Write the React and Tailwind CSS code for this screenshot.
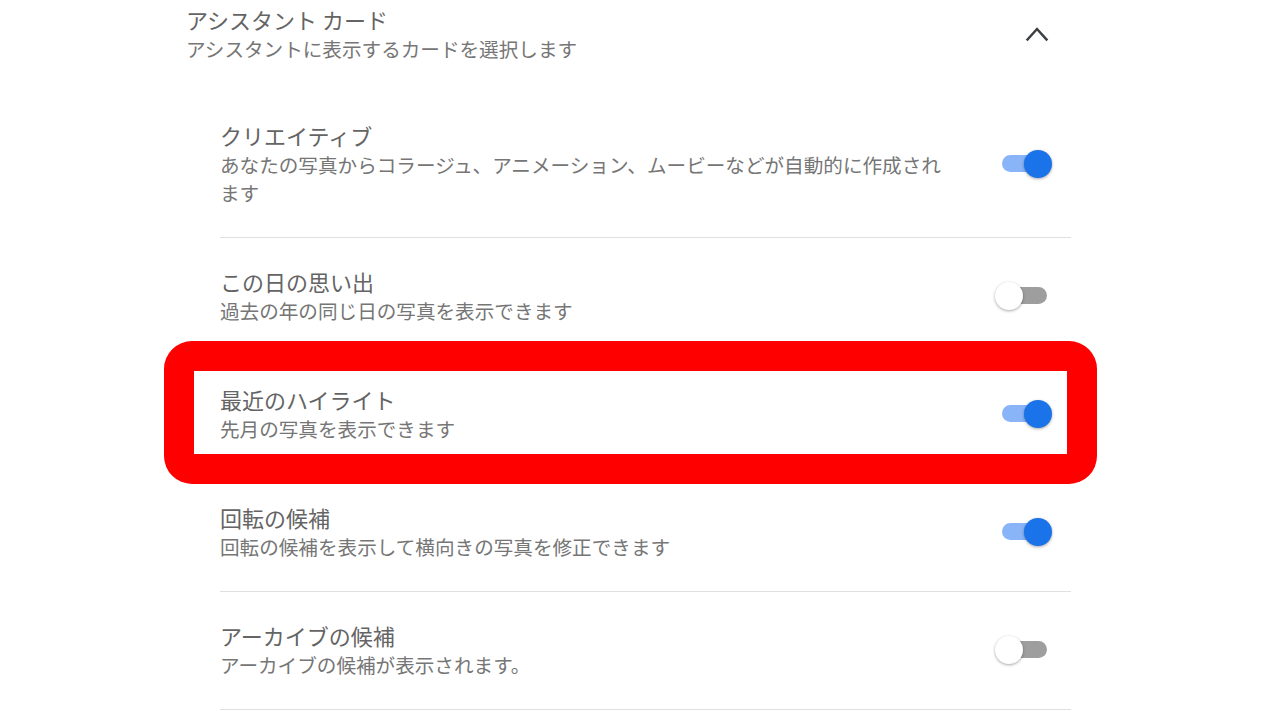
import React from "react";

const rows = [
  { title: "クリエイティブ", sub: "あなたの写真からコラージュ、アニメーション、ムービーなどが自動的に作成されます", on: true },
  { title: "この日の思い出", sub: "過去の年の同じ日の写真を表示できます", on: false },
  { title: "最近のハイライト", sub: "先月の写真を表示できます", on: true },
  { title: "回転の候補", sub: "回転の候補を表示して横向きの写真を修正できます", on: true },
  { title: "アーカイブの候補", sub: "アーカイブの候補が表示されます。", on: false },
];

function Toggle({ on }) {
  return (
    <div className="relative w-[57px] h-[28px] shrink-0 mr-[19px]">
      <div
        className={
          "absolute left-[7px] top-[5.5px] w-[45px] h-[17px] rounded-full " +
          (on ? "bg-[#8ab4f8]" : "bg-[#9e9e9e]")
        }
      />
      <div
        className={
          "absolute top-0 w-[28px] h-[28px] rounded-full shadow-[0_1px_3px_rgba(0,0,0,0.35)] " +
          (on ? "left-[29px] bg-[#1a73e8]" : "left-0 bg-white")
        }
      />
    </div>
  );
}

export default function App() {
  return (
    <div className="relative w-[1280px] h-[720px] overflow-hidden bg-white font-['Noto_Sans_CJK_JP','Noto_Sans',sans-serif]">
      <div className="pl-[186px] pt-[4px]">
        <div className="flex items-center justify-between w-[863px]">
          <div>
            <div className="text-[22px] leading-[31px] text-[#646464]">アシスタント カード</div>
            <div className="text-[19.6px] leading-[28px] text-[#767676]">
              アシスタントに表示するカードを選択します
            </div>
          </div>
          <svg width="24" height="24" viewBox="0 0 24 24" className="shrink-0">
            <polyline
              points="2.5,17.5 12,7 21.5,17.5"
              fill="none"
              stroke="#3c4043"
              strokeWidth="2.5"
              strokeLinecap="square"
            />
          </svg>
        </div>
        <div className="mt-[29px] ml-[34px] w-[851px]">
          {rows.map((r, i) => (
            <div key={i} className="flex items-center justify-between pt-[28px] pb-[30px] border-b border-[#e0e0e0]">
              <div className="w-[735px]">
                <div className="text-[22px] leading-[31px] text-[#646464]">{r.title}</div>
                <div className="text-[19.6px] leading-[28px] text-[#767676]">{r.sub}</div>
              </div>
              <Toggle on={r.on} />
            </div>
          ))}
        </div>
      </div>
      <div className="absolute left-[164px] top-[341px] w-[933px] h-[143px] border-[30px] border-[#ff0000] rounded-[28px]" />
    </div>
  );
}
